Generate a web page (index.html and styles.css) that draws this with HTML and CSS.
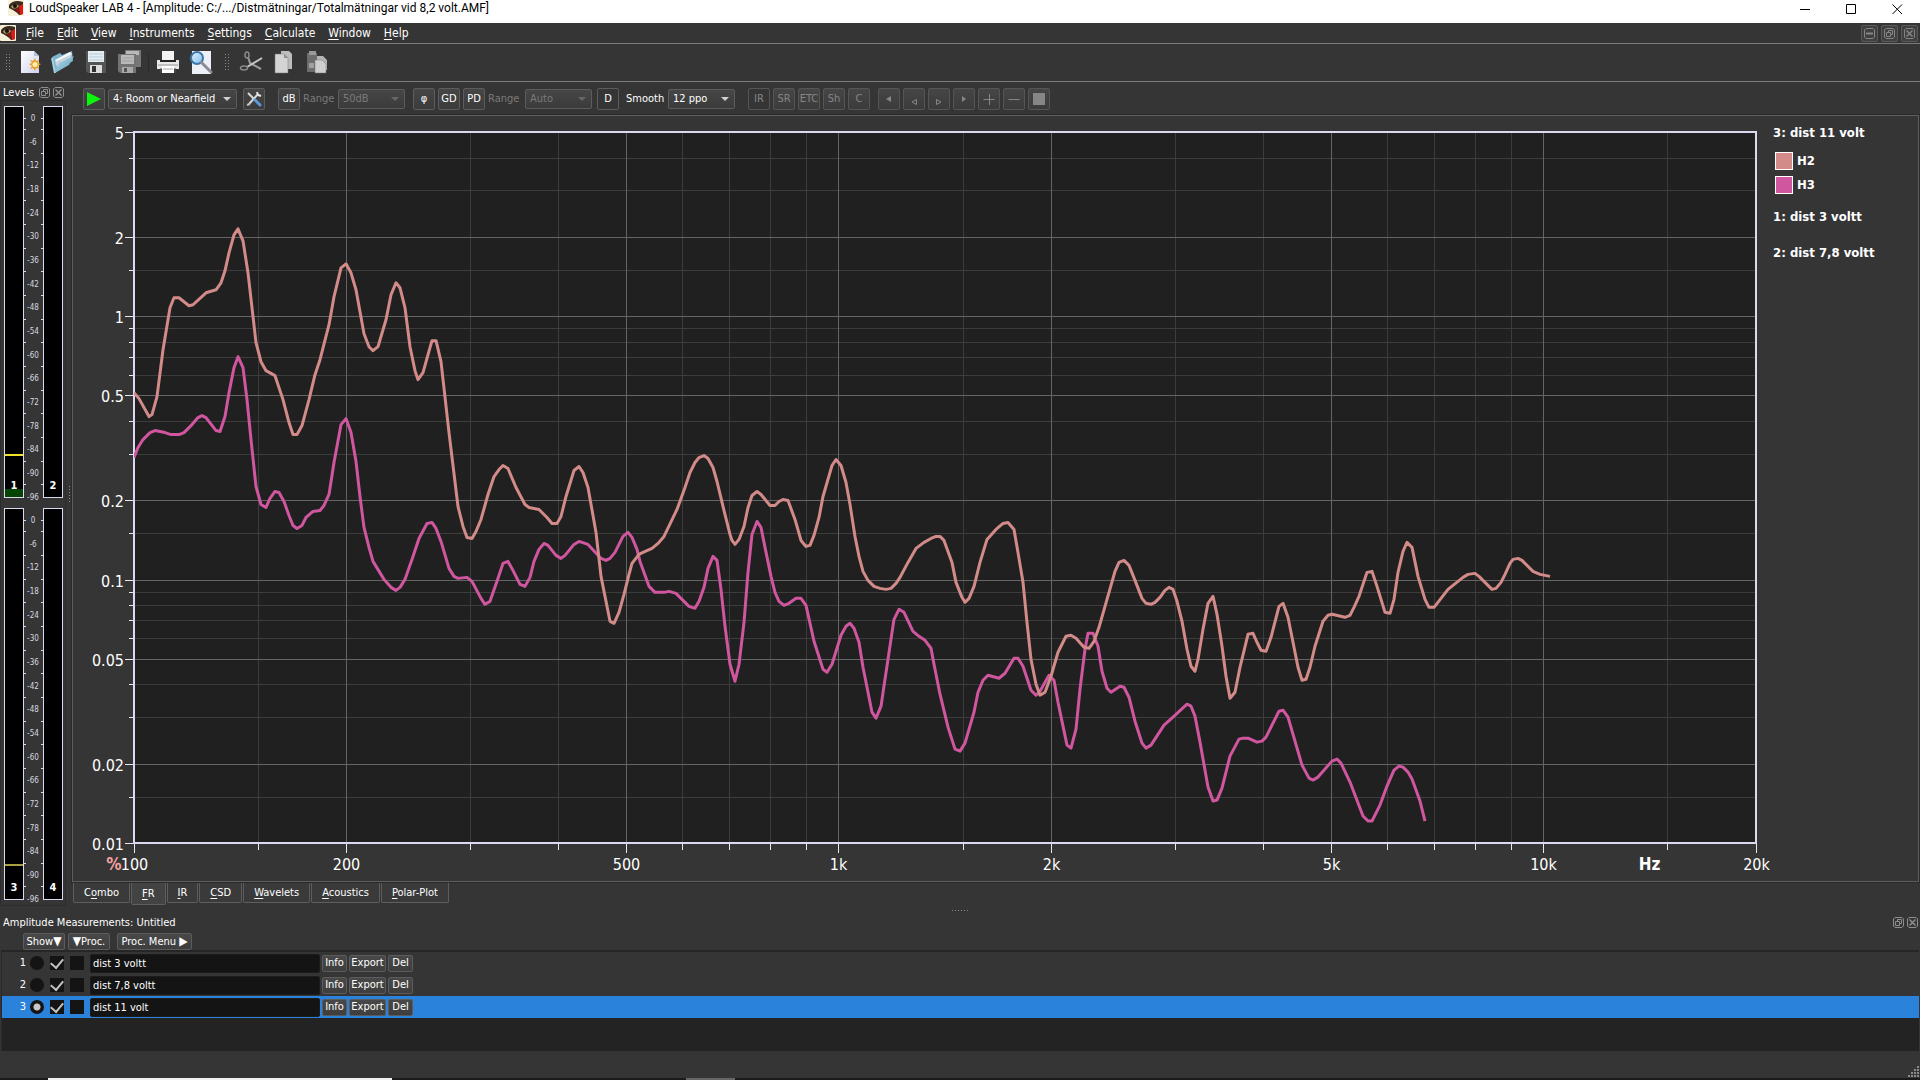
FILE: index.html
```html
<!DOCTYPE html>
<html lang="en">
<head>
<meta charset="utf-8">
<title>LoudSpeaker LAB 4</title>
<link rel="stylesheet" href="styles.css">
</head>
<body>
<svg class="defs" width="0" height="0" aria-hidden="true">
  <symbol id="logo" viewBox="0 0 16 16">
    <rect width="16" height="16" rx="1" fill="#f7f0d8"/>
    <path d="M1 5C4 1 9 0 15 2V14L11 15C9 12 5 10 1 8Z" fill="#3a2a20"/>
    <path d="M3 6C6 4 9 4 11 6C9 9 6 9 4 8Z" fill="#a89a60"/>
    <circle cx="7" cy="6" r="2" fill="#15100c"/>
    <path d="M11 6L15 4V14L12 15Z" fill="#e01818"/>
    <path d="M7 9L11 8V14Z" fill="#8c1410"/>
  </symbol>
  <symbol id="float" viewBox="0 0 11 11">
    <path d="M2 0.5H9L10.500 2V9L9 10.500H2L0.500 9V2Z" fill="none" stroke="currentColor"/>
    <path d="M2.500 4.500H6.500V8.500H2.500ZM4.500 4V2.500H8.500V6.500H7" fill="none" stroke="currentColor"/>
  </symbol>
  <symbol id="close" viewBox="0 0 11 11">
    <path d="M2 0.5H9L10.500 2V9L9 10.500H2L0.500 9V2Z" fill="none" stroke="currentColor"/>
    <path d="M2.500 2.500L8.500 8.500M8.500 2.500L2.500 8.500" fill="none" stroke="currentColor" stroke-width="1.500"/>
  </symbol>
  <symbol id="minimise" viewBox="0 0 11 11">
    <path d="M2 0.5H9L10.500 2V9L9 10.500H2L0.500 9V2Z" fill="none" stroke="currentColor"/>
    <path d="M2 5.500H9" stroke="currentColor" stroke-width="2"/>
  </symbol>
  <linearGradient id="page" x1="0" y1="0" x2="1" y2="1"><stop offset="0" stop-color="#fff"/><stop offset="1" stop-color="#cfd3ee"/></linearGradient>
  <linearGradient id="folder" x1="0" y1="0" x2="1" y2="1"><stop offset="0" stop-color="#b8dcec"/><stop offset="1" stop-color="#5a9cc0"/></linearGradient>
  <linearGradient id="lens" x1="0" y1="0" x2="1" y2="1"><stop offset="0" stop-color="#e4f4ff"/><stop offset="1" stop-color="#7cbcec"/></linearGradient>
</svg>

<header class="titlebar">
  <svg class="logo" aria-hidden="true"><use href="#logo"/></svg>
  <h1 class="title">LoudSpeaker LAB 4 - [Amplitude: C:/.../Distmätningar/Totalmätningar vid 8,2 volt.AMF]</h1>
  <button class="window-button" aria-label="Minimise"><svg viewBox="0 0 11 11"><path d="M0 5.500H10"/></svg></button>
  <button class="window-button" aria-label="Maximise"><svg viewBox="0 0 11 11"><path d="M0.500 0.500H9.500V9.500H0.500Z"/></svg></button>
  <button class="window-button" aria-label="Close"><svg viewBox="0 0 11 11"><path d="M0.500 0.500L10 10M10 0.500L0.500 10"/></svg></button>
</header>

<nav class="menubar">
  <svg class="logo" aria-hidden="true"><use href="#logo"/></svg>
  <button class="menu"><u>F</u>ile</button>
  <button class="menu"><u>E</u>dit</button>
  <button class="menu"><u>V</u>iew</button>
  <button class="menu"><u>I</u>nstruments</button>
  <button class="menu"><u>S</u>ettings</button>
  <button class="menu"><u>C</u>alculate</button>
  <button class="menu"><u>W</u>indow</button>
  <button class="menu"><u>H</u>elp</button>
  <div class="mdi">
    <button class="mdi-button" aria-label="Minimise document"><svg><use href="#minimise"/></svg></button>
    <button class="mdi-button" aria-label="Restore document"><svg><use href="#float"/></svg></button>
    <button class="mdi-button" aria-label="Close document"><svg><use href="#close"/></svg></button>
  </div>
</nav>

<div class="filebar">
  <span class="grip"></span>
  <button class="tool" aria-label="New"><svg viewBox="0 0 24 24"><path d="M3 1H16L21 6V23H3Z" fill="url(#page)"/><path d="M16 1L21 6H16Z" fill="#b8bce0"/><path d="M17 8L18 11L21 10L20 13L23 14L20 16L21 19L18 18L17 21L15 18L12 19L14 16L11 14L14 13L12 10L15 11Z" fill="#e8a030"/><circle cx="17" cy="14.500" r="2.500" fill="#fff0a8"/></svg></button>
  <button class="tool" aria-label="Open"><svg viewBox="0 0 24 24"><path d="M1 7L9 3L11 5L21 1L22 11L3 22Z" fill="#7fb4cc"/><path d="M4 10L19 2L21 4L8 18Z" fill="#f4f8fb"/><path d="M4 12L21 4L20 8L7 19Z" fill="#c8d4da"/><path d="M4 23L8 13L23 6L18 15Z" fill="url(#folder)"/><path d="M1 8L4 23" stroke="#9fd0e4" stroke-width="2"/></svg></button>
  <button class="tool" aria-label="Save"><svg viewBox="0 0 24 24"><path d="M2 1H22V23H4L2 21Z" fill="#555"/><path d="M4 1H20V12H4Z" fill="#e4eef4"/><path d="M5 4H19M5 7H19M5 10H19" stroke="#b8ccd8"/><path d="M6 15H18V23H6Z" fill="#ddd"/><path d="M8 16H12V22H8Z" fill="#333"/></svg></button>
  <button class="tool" aria-label="Save all"><svg viewBox="0 0 24 24"><path d="M8 0H24V17H8Z" fill="#777"/><path d="M9 1H22V5H9Z" fill="#b8b8b8"/><path d="M1 4H19V23H3L1 21Z" fill="#737373"/><path d="M4 5H17V14H4Z" fill="#bababa"/><path d="M5 8H16M5 11H16" stroke="#a0a0a0"/><path d="M5 17H16V23H5Z" fill="#aaa"/><path d="M7 18H10V22H7Z" fill="#555"/></svg></button>
  <span class="divider"></span>
  <button class="tool" aria-label="Print"><svg viewBox="0 0 24 24"><path d="M6 1H18V10H6Z" fill="#f4f4f4"/><path d="M1 10H23V19H1Z" fill="#e8e8e8"/><path d="M4 11H20" stroke="#222" stroke-width="2"/><path d="M2 15H22" stroke="#999"/><path d="M6 16H18V23H6Z" fill="#fff"/><path d="M5 18V23M19 18V23" stroke="#555"/><path d="M7 19H17" stroke="#aaa"/></svg></button>
  <button class="tool" aria-label="Print preview"><svg viewBox="0 0 24 24"><path d="M3 1H22V24H3Z" fill="#eef0f8"/><circle cx="8" cy="8" r="6" fill="url(#lens)" stroke="#3c78a8" stroke-width="2"/><path d="M12.500 12.500L22 22" stroke="#8c8c98" stroke-width="3" stroke-linecap="round"/></svg></button>
  <span class="grip grip-second"></span>
  <button class="tool" aria-label="Cut"><svg viewBox="0 0 24 24" fill="none"><path d="M9 7L11 13L22 19" stroke="#9a9a9a" stroke-width="2"/><path d="M23 8L8 17" stroke="#c8c8c8" stroke-width="2"/><ellipse cx="8" cy="5" rx="2" ry="3" stroke="#8a8a8a" stroke-width="1.500"/><ellipse cx="5" cy="18" rx="3.500" ry="2" stroke="#8a8a8a" stroke-width="1.500"/></svg></button>
  <button class="tool" aria-label="Copy"><svg viewBox="0 0 24 24"><path d="M9 1H17L20 4V19H9Z" fill="#bdbdbd"/><path d="M3 4H12L16 8V23H3Z" fill="#d4d4d4" stroke="#777" stroke-width="0.500"/><path d="M12 4V8H16Z" fill="#8d8d8d"/></svg></button>
  <button class="tool" aria-label="Paste"><svg viewBox="0 0 24 24"><path d="M2 3H12V22H2Z" fill="#6d6d6d"/><path d="M4 1H11V5H4Z" fill="#999"/><path d="M4 13H9V18H4Z" fill="#a0a0a0"/><path d="M12 6H18L22 10V20H12Z" fill="#b4b4b4"/><path d="M10 10H17L21 14V23H10Z" fill="#cfcfcf" stroke="#777" stroke-width="0.500"/></svg></button>
</div>

<div class="workspace">
  <aside class="levels">
    <div class="dock-title">
      <h2 class="dock-name">Levels</h2>
      <button class="dock-button" aria-label="Float levels"><svg><use href="#float"/></svg></button>
      <button class="dock-button" aria-label="Close levels"><svg><use href="#close"/></svg></button>
    </div>
    <div class="banks">
      <div class="bank">
        <div class="meter"><span class="level"></span><span class="peak peak-live"></span><b>1</b></div>
        <svg class="scale"></svg>
        <div class="meter"><b>2</b></div>
      </div>
      <div class="bank">
        <div class="meter"><span class="peak peak-held"></span><b>3</b></div>
        <svg class="scale"></svg>
        <div class="meter"><b>4</b></div>
      </div>
    </div>
  </aside>
  <div class="splitter-v"><span class="grip grip-small"></span></div>

  <main class="document">
    <div class="measurebar">
      <button class="key" aria-label="Run"><svg class="play" viewBox="0 0 16 16"><path d="M1 1L15 8L1 15Z"/></svg></button>
      <span class="combo combo-wide"><select aria-label="Instrument"><option>4: Room or Nearfield</option></select></span>
      <button class="key tools" aria-label="Instrument settings"><svg viewBox="0 0 16 16" fill="none"><path d="M3 13L12 3" stroke="#d8d8d8" stroke-width="2"/><path d="M11 1L12 4L15 5" stroke="#e8e8e8" stroke-width="2"/><path d="M1 14L4 13" stroke="#c0c0c0" stroke-width="2"/><path d="M2 2L9 9" stroke="#d8d8d8" stroke-width="2"/><path d="M9 9L14 14" stroke="#5a9ad8" stroke-width="3" stroke-linecap="round"/></svg></button>
      <button class="key group">dB</button>
      <label class="caption off" for="range-db">Range</label>
      <span class="combo off"><select id="range-db" disabled><option>50dB</option></select></span>
      <button class="key phase">φ</button>
      <button class="key">GD</button>
      <button class="key">PD</button>
      <label class="caption off" for="range-auto">Range</label>
      <span class="combo off auto"><select id="range-auto" disabled><option>Auto</option></select></span>
      <button class="key flat derive">D</button>
      <label class="caption caption-smooth" for="smooth">Smooth</label>
      <span class="combo"><select id="smooth"><option>12 ppo</option></select></span>
      <button class="key flat group" disabled>IR</button>
      <button class="key" disabled>SR</button>
      <button class="key" disabled>ETC</button>
      <button class="key" disabled>Sh</button>
      <button class="key" disabled>C</button>
      <button class="key pan" disabled aria-label="Back"><svg viewBox="0 0 16 16"><path d="M10 5V11L5 8Z" fill="currentColor"/></svg></button>
      <button class="key" disabled aria-label="Step back"><svg viewBox="0 0 16 16"><path d="M10.500 8.500V13.500L6 11Z" fill="none" stroke="currentColor"/></svg></button>
      <button class="key" disabled aria-label="Step forward"><svg viewBox="0 0 16 16"><path d="M5.500 8.500V13.500L10 11Z" fill="none" stroke="currentColor"/></svg></button>
      <button class="key" disabled aria-label="Forward"><svg viewBox="0 0 16 16"><path d="M6 5V11L10 8Z" fill="currentColor"/></svg></button>
      <button class="key" disabled aria-label="Zoom in"><svg viewBox="0 0 16 16"><path d="M2.500 8.500H13.500M8.500 3V14" stroke="currentColor"/></svg></button>
      <button class="key" disabled aria-label="Zoom out"><svg viewBox="0 0 16 16"><path d="M2.500 8.500H13.500" stroke="currentColor"/></svg></button>
      <button class="key" disabled aria-label="Zoom to fit"><svg viewBox="0 0 16 16"><path d="M2 2H14V14H2Z" fill="currentColor"/></svg></button>
    </div>

    <div class="graph">
      <svg class="chart" role="img" aria-label="Harmonic distortion in percent against frequency"></svg>
      <div class="legend">
        <p class="curve-name">3: dist 11 volt</p>
        <ul class="harmonics">
          <li><span class="swatch swatch-h2"></span>H2</li>
          <li><span class="swatch swatch-h3"></span>H3</li>
        </ul>
        <p class="curve-name">1: dist 3 voltt</p>
        <p class="curve-name">2: dist 7,8 voltt</p>
      </div>
    </div>

    <div class="tabs" role="tablist">
      <button class="tab" role="tab">C<u>o</u>mbo</button>
      <button class="tab tab-active" role="tab" aria-selected="true"><u>F</u>R</button>
      <button class="tab" role="tab"><u>I</u>R</button>
      <button class="tab" role="tab"><u>C</u>SD</button>
      <button class="tab" role="tab"><u>W</u>avelets</button>
      <button class="tab" role="tab"><u>A</u>coustics</button>
      <button class="tab" role="tab"><u>P</u>olar-Plot</button>
    </div>
  </main>
</div>

<div class="splitter-h"><span class="grip grip-flat"></span></div>

<section class="measurements">
  <div class="dock-title dock-title-wide">
    <h2 class="dock-name">Amplitude Measurements: Untitled</h2>
    <button class="dock-button" aria-label="Float measurements"><svg><use href="#float"/></svg></button>
    <button class="dock-button" aria-label="Close measurements"><svg><use href="#close"/></svg></button>
  </div>
  <div class="actions">
    <button class="small small-show">Show<span class="mark">▼</span></button>
    <button class="small small-show"><span class="mark">▼</span>Proc.</button>
    <button class="small small-menu">Proc. Menu <span class="mark">▶</span></button>
  </div>
  <div class="list">
    <div class="row">
      <label class="number" for="m1">1</label><input class="radio" type="radio" name="current" id="m1">
      <input class="check" type="checkbox" aria-label="Show 1" checked><input class="check" type="checkbox" aria-label="Process 1">
      <input class="name" type="text" aria-label="Name 1" value="dist 3 voltt">
      <button class="small small-info">Info</button><button class="small small-export">Export</button><button class="small small-info">Del</button>
    </div>
    <div class="row">
      <label class="number" for="m2">2</label><input class="radio" type="radio" name="current" id="m2">
      <input class="check" type="checkbox" aria-label="Show 2" checked><input class="check" type="checkbox" aria-label="Process 2">
      <input class="name" type="text" aria-label="Name 2" value="dist 7,8 voltt">
      <button class="small small-info">Info</button><button class="small small-export">Export</button><button class="small small-info">Del</button>
    </div>
    <div class="row row-current">
      <label class="number" for="m3">3</label><input class="radio" type="radio" name="current" id="m3" checked>
      <input class="check" type="checkbox" aria-label="Show 3" checked><input class="check" type="checkbox" aria-label="Process 3">
      <input class="name" type="text" aria-label="Name 3" value="dist 11 volt">
      <button class="small small-info">Info</button><button class="small small-export">Export</button><button class="small small-info">Del</button>
    </div>
  </div>
</section>

<footer class="statusbar">
  <svg class="size-grip" viewBox="0 0 12 12" aria-hidden="true"><path d="M9 1h2M6 4h2M9 4h2M3 7h2M6 7h2M9 7h2M0 10h2M3 10h2M6 10h2M9 10h2" stroke="#8a8a8a" stroke-width="2"/></svg>
</footer>
<div class="taskbar"><span class="task"></span><span class="task task-dim"></span></div>
<script src="chart.js"></script>
</body>
</html>
```
FILE: styles.css
```css
* { box-sizing: border-box; }

body {
  margin: 0;
  min-height: 100vh;
  display: flex;
  flex-direction: column;
  background: #353535;
  color: #fff;
  font: 11px/14px "DejaVu Sans Condensed", "Noto Sans", sans-serif;
}

button, input, select { font: inherit; color: inherit; margin: 0; }
button { padding: 0; border: 0; background: none; white-space: nowrap; }
h1, h2, p, ul { margin: 0; padding: 0; font: inherit; list-style: none; }
u { text-decoration: underline 1px; text-underline-offset: 2px; text-decoration-skip-ink: none; }
.defs { position: absolute; }

/* Window title */
.titlebar {
  display: flex;
  align-items: flex-start;
  height: 23px;
  padding-left: 8px;
  background: #fff;
  color: #000;
}
.logo { width: 16px; height: 16px; flex: none; }
.title {
  flex: 1;
  padding-left: 5px;
  font: 12px/16px Roboto, sans-serif;
  white-space: nowrap;
}
.window-button { width: 46px; height: 16px; padding-top: 2px; }
.window-button svg {
  display: block;
  width: 11px;
  height: 11px;
  margin: 0 auto;
  fill: none;
  stroke: #000;
}

/* Menus */
.menubar {
  display: flex;
  align-items: center;
  height: 21px;
  border-bottom: 1px solid #7a7a7a;
}
.menubar .logo { margin-right: 4px; }
.menu { padding: 0 6px; margin-right: 1px; height: 20px; font-size: 12px; }
.mdi { display: flex; gap: 3px; margin-left: auto; padding-right: 2px; }
.mdi-button {
  width: 17px;
  height: 17px;
  border: 1px solid #5a5a5a;
  border-radius: 2px;
  background: #404040;
  color: #858585;
}
.mdi-button svg { display: block; width: 11px; height: 11px; margin: 0 auto; }

/* File tools */
.filebar {
  display: flex;
  align-items: center;
  gap: 9px;
  height: 38px;
  padding: 0 0 2px 5px;
  border-bottom: 1px solid #7a7a7a;
}
.grip {
  width: 6px;
  height: 18px;
  background: radial-gradient(circle, #8a8a8a 1px, transparent 1px) 0 0 / 3px 3px;
}
.grip-small { width: 3px; }
.grip-flat { width: 18px; height: 3px; }
.grip-second { margin: 0 2px; }
.tool { width: 24px; height: 24px; }
.tool svg { display: block; width: 24px; height: 24px; }
.divider { width: 1px; height: 20px; margin: 0 -2px; background: #2b2b2b; }
.filebar .grip + .tool { margin-left: -2px; }

/* Level meters */
.workspace { flex: 1; display: flex; }
.levels { width: 66px; display: flex; flex-direction: column; padding-top: 3px; }
.dock-title { display: flex; align-items: center; gap: 3px; height: 15px; padding-left: 3px; }
.dock-title .dock-name { margin-right: 2px; }
.dock-button { color: #8e8e8e; }
.dock-button svg { display: block; width: 11px; height: 11px; }
.banks {
  flex: 1;
  display: flex;
  flex-direction: column;
  gap: 10px;
  padding: 5px 2px 5px 3px;
  border: 1px solid #2c2c2c;
}
.bank { flex: 1; display: grid; grid-template-columns: 20px 19px 20px; }
.meter {
  position: relative;
  display: flex;
  flex-direction: column;
  justify-content: flex-end;
  border: 1px solid #dcd8f0;
  background: #000;
  text-align: center;
}
.meter b { padding-bottom: 4px; z-index: 1; }
.level { position: absolute; left: 0; right: 0; bottom: 0; height: 8px; background: #044404; }
.peak { position: absolute; left: 0; right: 0; height: 2px; }
.peak-live { top: 89%; background: #f0e02c; }
.peak-held { top: 91%; background: #a8a040; }
.scale { width: 19px; height: 100%; overflow: visible; }
.scale text { fill: #d8d8e0; font-size: 8px; text-anchor: middle; }
.scale line { stroke: #dcd8f0; shape-rendering: crispEdges; }

.splitter-v { width: 6px; display: flex; align-items: center; justify-content: center; }
.splitter-h { height: 8px; display: flex; align-items: center; justify-content: center; }

/* Measurement tools */
.document { flex: 1; min-width: 0; display: flex; flex-direction: column; }
.measurebar {
  display: flex;
  align-items: center;
  gap: 3px;
  height: 33px;
  padding: 0 0 0 11px;
}
.key {
  width: 22px;
  height: 22px;
  border: 1px solid #5c5c5c;
  border-radius: 2px;
  background: linear-gradient(#464646, #3b3b3b);
  overflow: hidden;
}
.key svg { display: block; width: 16px; height: 16px; margin: 0 auto; }
.key:disabled { color: #868686; border-color: #555; }
.flat { background: #353535; }
.play { fill: #0cf50c; }
.tools { margin-left: 3px; }
.group { margin-left: 10px; }
.phase, .pan { margin-left: 5px; }
.caption { width: 32px; }
.auto, .derive { margin-left: 2px; }
.caption-smooth { width: 39px; margin-left: 4px; }
.off { color: #7a7a7a; }
.combo { position: relative; width: 67px; height: 20px; }
.combo-wide { width: 129px; }
.combo select {
  appearance: none;
  width: 100%;
  height: 20px;
  padding: 0 4px;
  border: 1px solid #5c5c5c;
  border-radius: 2px;
  background: linear-gradient(#464646, #3b3b3b);
  opacity: 1;
}
.combo::after {
  content: "";
  position: absolute;
  right: 6px;
  top: 8px;
  border: 4px solid transparent;
  border-top-color: #d0d0d0;
  border-bottom: 0;
}
.combo.off::after { border-top-color: #666; }

/* Graph */
.graph {
  flex: 1;
  min-height: 0;
  display: flex;
  margin-right: 1px;
  border: 1px solid #5e5e5e;
  outline: 1px solid #2a2a2a;
}
.chart { flex: 1; min-width: 0; height: auto; overflow: visible; }
.chart text { fill: #fff; font-size: 16px; }
.chart .unit { font-weight: bold; font-size: 17px; }
.chart .percent { fill: #f2a0a0; }
.chart .plot { fill: #202020; stroke: #dcd8f0; stroke-width: 2; }
.chart .minor { stroke: #3c3c3c; shape-rendering: crispEdges; }
.chart .major { stroke: #646464; shape-rendering: crispEdges; }
.chart .tick { stroke: #e8e6f6; shape-rendering: crispEdges; }
.chart polyline { fill: none; stroke-width: 3; stroke-linejoin: round; vector-effect: non-scaling-stroke; }
.chart .h2 { stroke: #d28b88; }
.chart .h3 { stroke: #cf569f; }
.legend { width: 152px; padding: 8px 0 0 7px; font-weight: bold; font-size: 13px; line-height: 18px; }
.harmonics { padding: 10px 0 14px 2px; display: flex; flex-direction: column; gap: 6px; }
.harmonics li { display: flex; align-items: center; gap: 4px; }
.swatch { width: 18px; height: 18px; border: 1px solid #fff; }
.swatch-h2 { background: #d28b88; }
.swatch-h3 { background: #cf569f; }
.curve-name + .curve-name { margin-top: 18px; }

/* View tabs */
.tabs { display: flex; gap: 1px; align-items: flex-start; height: 24px; padding: 1px 0 0 1px; }
.tab {
  height: 20px;
  padding: 0 10px;
  border: 1px solid #5e5e5e;
  border-top: 0;
  border-radius: 0 0 2px 2px;
  background: #3a3a3a;
}
.tab-active { height: 22px; background: #434343; }

/* Measurement list */
.dock-title-wide { height: 17px; padding-right: 2px; }
.dock-title-wide .dock-name { margin-right: auto; }
.actions { display: flex; gap: 3px; height: 19px; padding: 2px 0 0 23px; }
.small {
  height: 17px;
  border: 1px solid #5c5c5c;
  border-radius: 2px;
  background: linear-gradient(#484848, #3e3e3e);
  line-height: 14px;
}
.mark { font-size: 12px; line-height: 12px; }
.small-show { width: 42px; }
.small-menu { width: 75px; margin-left: 4px; }
.small-info { width: 25px; }
.small-export { width: 37px; }
.list {
  min-height: 101px;
  margin: 0 1px;
  border-top: 2px solid #262626;
  border-left: 1px solid #2a2a2a;
  background: #232323;
}
.row { display: flex; align-items: center; gap: 2px; height: 22px; background: #353535; }
.row-current { background: #2a82da; }
.number { width: 24px; text-align: right; }
.radio, .check {
  appearance: none;
  width: 14px;
  height: 14px;
  margin-right: 4px;
  background: #141414;
}
.radio { margin-left: 2px; border-radius: 7px; }
.radio:checked { background: radial-gradient(circle, #c8c8c8 3px, #141414 4px); }
.check:checked { display: grid; place-items: center; }
.check:checked::after {
  content: "";
  width: 6px;
  height: 10px;
  margin-bottom: 3px;
  border: solid #c4c4c4;
  border-width: 0 2px 2px 0;
  transform: rotate(40deg);
}
.name { width: 230px; height: 19px; padding: 0 2px; border: 1px solid #1c1c1c; border-radius: 2px; background: #141414; }

.statusbar { display: flex; align-items: flex-end; justify-content: flex-end; height: 27px; }
.size-grip { width: 12px; height: 12px; }
.taskbar { display: flex; height: 2px; padding-left: 48px; background: #1c1a1c; }
.task { width: 344px; background: #f2f2f2; }
.task-dim { width: 49px; margin-left: 294px; background: #666; }
```
FILE: chart.js
```js
const NS = "http://www.w3.org/2000/svg";

function add(parent, tag, attrs, text) {
  const node = document.createElementNS(NS, tag);
  for (const key in attrs) node.setAttribute(key, attrs[key]);
  if (text !== undefined) node.textContent = text;
  parent.appendChild(node);
  return node;
}

// Curve samples on a 1622 x 712 plot area.
const H2 = `0,261 5,267 15,285 18,283 23,265 29,218 36,176 40,166 45,166 55,174 59,173 72,161 82,158 87,151 91,139 95,121
100,103 104,97 109,109 114,141 122,211 127,230 132,239 141,244 149,268 155,291 159,303 163,303 168,294 175,268 181,243
186,228 195,193 200,165 207,136 212,132 217,141 222,158 230,202 235,215 239,219 244,215 252,188 257,163 262,151 266,156
271,176 276,215 281,239 284,248 289,241 294,223 298,209 302,209 307,230 315,301 324,375 329,395 333,406 338,407 342,400
347,388 354,363 360,345 365,338 369,334 374,337 382,356 391,373 395,376 405,378 413,386 418,392 423,392 427,385 432,365
440,339 445,335 449,341 454,356 459,384 462,401 467,445 476,490 480,492 485,481 490,463 495,443 498,432 505,423 509,421
518,417 524,412 530,405 543,378 551,356 556,341 561,331 565,326 570,324 574,327 579,336 583,350 589,375 596,403 598,409
601,413 605,408 610,395 614,376 618,364 623,360 627,363 636,374 641,374 645,370 649,368 654,369 661,388 667,409 672,415
676,414 680,404 685,386 689,365 698,334 702,328 707,334 712,351 716,373 721,405 725,425 729,440 734,449 740,455 746,457
752,458 757,457 762,452 766,446 774,431 782,417 790,411 797,407 802,405 806,405 810,409 818,431 822,451 828,466 831,471
835,467 840,455 846,431 853,408 862,398 869,392 874,391 880,398 884,421 889,451 893,491 897,528 902,553 906,564 911,561
917,545 924,521 929,511 932,505 937,504 942,507 950,516 955,517 960,510 965,496 973,468 981,440 985,431 990,429 995,434
1001,449 1008,467 1012,472 1017,473 1021,471 1026,466 1031,459 1035,456 1039,458 1043,470 1048,490 1053,518 1057,535
1061,540 1064,528 1069,498 1074,472 1079,465 1083,483 1088,515 1092,545 1096,567 1101,561 1106,536 1114,503 1119,502
1123,511 1127,519 1132,520 1137,506 1145,475 1149,472 1154,486 1159,511 1164,536 1168,549 1172,548 1176,536 1181,515
1189,490 1194,484 1198,483 1211,486 1216,484 1220,476 1225,465 1233,441 1238,440 1243,455 1251,481 1256,482 1260,468
1264,441 1269,420 1273,411 1278,416 1284,445 1291,468 1295,476 1300,476 1314,458 1329,446 1334,443 1341,442 1345,445
1358,458 1362,457 1367,451 1371,443 1376,432 1379,428 1384,427 1388,429 1399,440 1406,443 1416,445`;

const H3 = `0,326 4,316 9,308 16,301 21,299 31,301 37,303 45,303 50,301 58,293 64,286 68,284 72,286 82,299 86,300 91,285
95,261 100,236 104,225 109,236 113,268 117,308 122,355 127,373 132,376 136,367 141,360 145,361 150,370 155,384 159,394
163,397 168,394 172,386 179,380 186,379 190,374 195,363 200,331 207,293 212,287 217,301 222,330 226,365 230,396 235,416
239,430 250,448 257,456 262,459 266,456 271,448 279,425 285,407 293,392 298,391 302,397 307,410 315,437 320,445 324,447
333,446 338,450 347,467 351,473 356,470 363,450 369,432 374,430 379,439 386,453 391,455 396,446 400,430 405,418 410,412
414,414 422,424 427,427 431,424 440,413 445,410 454,413 467,427 472,429 476,427 481,421 489,405 494,401 498,406 503,418
506,430 515,455 521,461 530,461 535,460 542,462 555,475 561,477 565,470 570,456 574,437 579,425 583,429 587,458 591,495
596,533 601,550 605,533 610,491 614,441 618,403 623,390 627,396 631,416 637,445 641,461 645,470 650,474 655,472 662,467
667,467 672,474 680,510 689,538 693,541 698,533 707,504 712,495 716,492 720,497 725,511 729,536 738,581 742,587 747,575
751,548 760,488 765,478 770,481 779,500 785,505 791,509 797,517 800,533 806,563 814,596 821,618 826,620 831,612 840,581
844,561 849,549 854,544 865,547 871,542 880,527 884,527 889,535 897,559 902,564 906,560 915,544 920,549 924,571 929,595
933,614 937,617 942,598 946,558 951,518 954,502 959,502 964,515 968,540 973,557 977,561 986,555 990,556 995,566 1001,590
1008,612 1012,617 1017,614 1030,594 1039,586 1053,573 1057,575 1061,585 1066,611 1074,656 1079,670 1083,669 1088,657
1096,625 1105,608 1109,607 1114,607 1123,611 1128,610 1132,606 1145,580 1149,579 1154,586 1168,634 1175,647 1179,649
1184,646 1198,630 1203,628 1207,632 1216,651 1229,685 1234,690 1238,690 1246,674 1253,655 1260,639 1265,635 1269,636
1274,641 1278,648 1286,670 1291,690`;

const FREQ_MAJOR = [[100, "100"], [200, "200"], [500, "500"], [1000, "1k"], [2000, "2k"], [5000, "5k"], [10000, "10k"], [20000, "20k"]];
const FREQ_MINOR = [150, 300, 400, 600, 700, 800, 900, 1500, 3000, 4000, 6000, 7000, 8000, 9000, 15000];
const PCT_MAJOR = [5, 2, 1, 0.5, 0.2, 0.1, 0.05, 0.02, 0.01];
const PCT_MINOR = [4, 3, 1.5, 0.9, 0.8, 0.7, 0.6, 0.4, 0.3, 0.15, 0.09, 0.08, 0.07, 0.06, 0.04, 0.03, 0.015];

const chart = document.querySelector(".chart");

function drawChart() {
  const box = chart.parentElement.getBoundingClientRect();
  const left = 61, top = 16, right = box.width - 164, bottom = box.height - 40;
  const w = right - left, h = bottom - top;
  const fx = f => Math.floor(left + w * Math.log(f / 100) / Math.log(200)) + 0.5;
  const py = p => Math.round(top + h * Math.log(5 / p) / Math.log(500)) + 0.5;
  chart.replaceChildren();
  add(chart, "rect", { x: left, y: top, width: w, height: h, class: "plot" });

  const vertical = (f, kind, tick) => {
    const x = fx(f);
    if (f > 100 && f < 20000) add(chart, "line", { x1: x, x2: x, y1: top + 1, y2: bottom - 1, class: kind });
    add(chart, "line", { x1: x, x2: x, y1: bottom + 1, y2: bottom + tick, class: "tick" });
  };
  const horizontal = (p, kind, tick) => {
    const y = py(p);
    if (p > 0.01 && p < 5) add(chart, "line", { x1: left + 1, x2: right - 1, y1: y, y2: y, class: kind });
    add(chart, "line", { x1: left - tick, x2: left - 1, y1: y, y2: y, class: "tick" });
  };
  FREQ_MINOR.forEach(f => vertical(f, "minor", 7));
  PCT_MINOR.forEach(p => horizontal(p, "minor", 5));
  FREQ_MAJOR.forEach(([f]) => vertical(f, "major", 10));
  PCT_MAJOR.forEach(p => horizontal(p, "major", 9));

  add(chart, "text", { x: left - 20, y: bottom + 27, "text-anchor": "middle", class: "unit percent" }, "%");
  FREQ_MAJOR.forEach(([f, name]) => add(chart, "text", { x: fx(f), y: bottom + 27, "text-anchor": "middle" }, name));
  PCT_MAJOR.forEach(p => add(chart, "text", { x: left - 10, y: py(p) + 6, "text-anchor": "end" }, String(p)));
  add(chart, "text", { x: fx(14142), y: bottom + 27, "text-anchor": "middle", class: "unit" }, "Hz");

  const curves = add(chart, "svg", { x: left, y: top, width: w, height: h, viewBox: "0 0 1622 712", preserveAspectRatio: "none" });
  add(curves, "polyline", { points: H3, class: "h3" });
  add(curves, "polyline", { points: H2, class: "h2" });
}

document.querySelectorAll(".scale").forEach(scale => {
  const at = db => (12 + 378.5 * db / 96) / 3.92 + "%";
  const ticks = [0];
  for (let db = 3; db < 96; db += 6) ticks.push(db);
  ticks.forEach(db => {
    add(scale, "line", { x1: 0, x2: 2, y1: at(db), y2: at(db) });
    add(scale, "line", { x1: 17, x2: 19, y1: at(db), y2: at(db) });
  });
  for (let db = 0; db <= 96; db += 6) {
    add(scale, "text", { x: 9, y: at(db), dy: 3 }, String(-db || 0));
  }
});

drawChart();
window.addEventListener("resize", drawChart);
```
